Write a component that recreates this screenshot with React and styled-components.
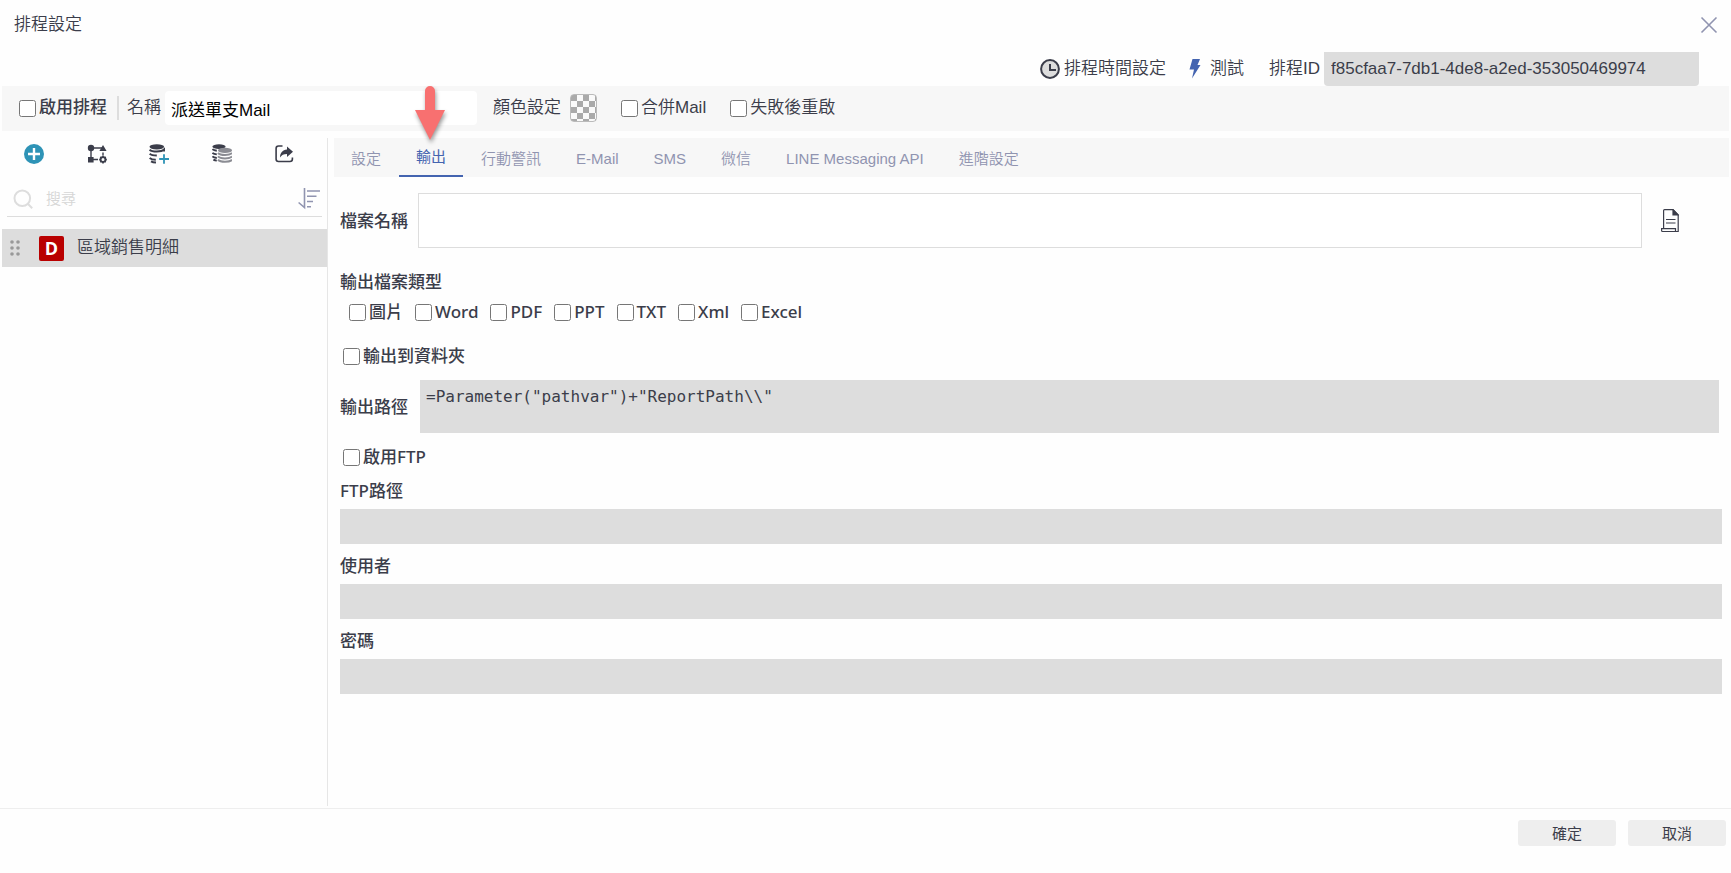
import React from 'react';
import styled, { createGlobalStyle } from 'styled-components';

const GlobalStyle = createGlobalStyle`
  * { box-sizing: border-box; }
  body {
    margin: 0;
    background: #fefefe;
    color: #3b3d4a;
    font: 350 17px/24px 'Liberation Sans', 'Noto Sans CJK TC', sans-serif;
  }
  input, textarea, button { font: inherit; color: inherit; margin: 0; }
`;

const Dialog = styled.div`
  display: flex;
  flex-direction: column;
  min-height: 100vh;
`;

const TitleBar = styled.header`
  display: flex;
  align-items: center;
  justify-content: space-between;
  height: 52px;
  padding: 0 12px 3px 14px;
`;

const Title = styled.h1`
  margin: 0;
  font-size: 17px;
  font-weight: inherit;
`;

const IconButton = styled.button`
  display: flex;
  align-items: center;
  justify-content: center;
  width: ${p => p.$size || 20}px;
  height: ${p => p.$size || 20}px;
  padding: 0;
  border: 0;
  background: none;
  cursor: pointer;
  svg { flex: none; }
`;

const ActionBar = styled.div`
  display: flex;
  align-items: center;
  justify-content: flex-end;
  padding-right: 32px;
`;

const Action = styled.button`
  display: flex;
  align-items: center;
  gap: ${p => p.$gap}px;
  margin-right: ${p => p.$after}px;
  padding: 0;
  border: 0;
  background: none;
  cursor: pointer;
`;

const IdInput = styled.input`
  width: 375px;
  height: 34px;
  margin-left: 4px;
  padding: 0 7px 1px;
  border: 0;
  border-radius: 0 0 4px 4px;
  background: #ddd;
`;

const Toolbar = styled.div`
  display: flex;
  align-items: center;
  height: 45px;
  margin: 0 2px;
  padding: 0 0 1px 17px;
  background: #f7f7f7;
`;

const CheckLabel = styled.label`
  display: flex;
  align-items: center;
  gap: 3px;
  font-weight: ${p => (p.$bold ? 500 : 'inherit')};
`;

const Check = styled.input.attrs({ type: 'checkbox' })`
  width: 17px;
  height: 17px;
`;

const ToolbarChecks = styled.div`
  display: flex;
  gap: 24px;
`;

const Divider = styled.span`
  width: 2px;
  height: 24px;
  margin: 0 8px 0 10px;
  background: #ddd;
`;

const NameInput = styled.input`
  width: 312px;
  height: 34px;
  margin: 0 16px 0 4px;
  padding: 0 6px;
  border: 0;
  border-radius: 4px;
  background: #fff;
  color: #000;
  font-weight: 400;
`;

const Swatch = styled.button`
  width: 27px;
  height: 28px;
  margin: 0 24px 0 9px;
  padding: 0;
  border: 1px solid #bbb;
  border-radius: 4px;
  background: repeating-conic-gradient(#fafafa 0 25%, #aaa 0 50%) 0 0 / 12px 12px;
`;

const Body = styled.div`
  display: flex;
  flex: 1;
  margin: 7px 2px 2px;
`;

const Side = styled.aside`
  flex: none;
  width: 326px;
  border-right: 1px solid #e6e6e6;
`;

const SideTools = styled.div`
  display: flex;
  justify-content: space-between;
  padding: 6px 33px 0 22px;
`;

const SearchBox = styled.div`
  display: flex;
  align-items: center;
  height: 36px;
  margin: 17px 5px 12px;
  padding: 0 2px 0 6px;
  border-bottom: 1px solid #ddd;
`;

const SearchInput = styled.input`
  flex: 1;
  min-width: 0;
  padding: 0 13px;
  border: 0;
  background: none;
  font-size: 15px;
  outline: 0;
  &::placeholder { color: #d6d6d6; }
`;

const ReportItem = styled.div`
  display: flex;
  align-items: center;
  height: 38px;
  padding-left: 8px;
  background: #ddd;
`;

const ReportBadge = styled.span`
  width: 25px;
  height: 25px;
  margin: 0 13px 0 19px;
  border-radius: 2px;
  background: #b90000;
  color: #fff;
  font: 700 18px/24px 'Open Sans', sans-serif;
  text-align: center;
`;

const Content = styled.main`
  flex: 1;
  min-width: 0;
  padding-left: 6px;
`;

const Tabs = styled.nav`
  display: flex;
  gap: 1px;
  height: 39px;
  background: #f7f7f7;
`;

const Tab = styled.button`
  position: relative;
  padding: ${p => (p.$active ? '0 17px' : '4px 17px 0')};
  border: 0;
  border-bottom: 2px solid ${p => (p.$active ? '#4464b0' : 'transparent')};
  background: none;
  color: ${p => (p.$active ? '#4464b0' : '#9094b0')};
  font-size: 15px;
  font-weight: ${p => (p.$active ? 400 : 'inherit')};
  white-space: nowrap;
  cursor: pointer;
`;

const Pointer = styled.svg`
  position: absolute;
  left: 50%;
  bottom: 34px;
  margin-left: -19px;
  overflow: visible;
  filter: drop-shadow(1px 3px 2px rgba(0, 0, 0, 0.4));
  pointer-events: none;
`;

const Form = styled.form`
  padding: 16px 7px 0 6px;
  font-family: 'Noto Sans', 'Noto Sans CJK TC', sans-serif;
  font-weight: 500;
`;

const FieldRow = styled.div`
  display: flex;
  align-items: center;
  gap: ${p => p.$gap}px;
  padding-right: ${p => p.$right}px;
`;

const ExpressionBox = styled.textarea`
  display: block;
  flex: 1;
  min-width: 0;
  height: ${p => (p.disabled ? 53 : 55)}px;
  padding: ${p => (p.disabled ? '5px 6px' : '4px')};
  border: ${p => (p.disabled ? 0 : '1px solid #ddd')};
  background: ${p => (p.disabled ? '#ddd' : '#fff')};
  color: #3b3d4a;
  font: 400 16px/24px 'DejaVu Sans Mono', monospace;
  resize: none;
`;

const GroupTitle = styled.div`
  margin-top: 22px;
`;

const TypeList = styled.div`
  display: flex;
  gap: 12px;
  margin: 6px 0 20px;
  padding-left: 9px;
`;

const Option = styled.div`
  display: flex;
  padding: ${p => p.$pad};
`;

const Field = styled.label`
  display: block;
  margin-bottom: 10px;
`;

const FieldInput = styled.input`
  display: block;
  width: 100%;
  height: 35px;
  margin-top: 6px;
  padding: 0 6px;
  border: 0;
  background: #ddd;
`;

const Footer = styled.footer`
  display: flex;
  justify-content: flex-end;
  gap: 12px;
  height: 65px;
  padding: 11px 5px 0;
  border-top: 1px solid #eee;
`;

const FooterButton = styled.button`
  width: 98px;
  height: 26px;
  padding: 2px 0 0;
  border: 0;
  border-radius: 3px;
  background: #eee;
  font-size: 15px;
  font-weight: 400;
  cursor: pointer;
`;

const CloseIcon = () => (
  <svg width="18" height="18" viewBox="0 0 18 18" stroke="#9094b0" strokeWidth="1.6">
    <path d="M1.5 1.5l15 15M16.5 1.5l-15 15" />
  </svg>
);

const ClockIcon = () => (
  <svg width="20" height="20" viewBox="0 0 20 20" stroke="#3b3d4a" strokeWidth="2">
    <circle cx="10" cy="10" r="8.9" fill="#ddd" />
    <path d="M10 5v6h6" fill="none" />
  </svg>
);

const BoltIcon = () => (
  <svg width="12" height="20" viewBox="0 0 12 20" fill="#4464b0">
    <path d="M3.5 0H11L8.5 6H11.5L3 19.5L5 10.5H0.5Z" />
  </svg>
);

const AddIcon = () => (
  <svg width="20" height="20" viewBox="0 0 20 20">
    <circle cx="10" cy="10" r="10" fill="#2e93b6" />
    <path d="M10 4v12M4 10h12" stroke="#fff" strokeWidth="2.4" />
  </svg>
);

const FlowIcon = () => (
  <svg width="20" height="20" viewBox="0 0 20 20" fill="#3b3d4a">
    <path d="M4 4.5V16M4 4h11M16 8.5v3M6 15.5h5" stroke="#3b3d4a" strokeWidth="1.4" />
    <circle cx="4" cy="4" r="3.2" />
    <path d="M16 1l3.6 6h-7.2zM1 13h5.6v5.6H1z" />
    <circle cx="16" cy="15.6" r="2.4" fill="none" stroke="#3b3d4a" strokeWidth="1.8" />
    <path
      d="M16 11.8v1.4M16 18v1.4M12.2 15.6h1.4M18.4 15.6h1.4M13.3 12.9l1 1M17.7 17.3l1 1M18.7 12.9l-1 1M14.3 17.3l-1 1"
      stroke="#3b3d4a"
      strokeWidth="1.6"
    />
  </svg>
);

const DataAddIcon = () => (
  <svg width="20" height="20" viewBox="0 0 20 20">
    <ellipse cx="7.8" cy="2.8" rx="7.3" ry="2.6" fill="#3b3d4a" />
    <path
      d="M.6 5.6c1.5 1.5 4 1.9 7.2 1.9s5.6-.4 7.2-1.9v2M.6 9.8c1.5 1.4 4 1.8 7.2 1.8M.6 14c1.5 1.4 3.5 1.8 6.2 1.8M2 17.4c1.4.8 3 1.1 5 1.2"
      fill="none"
      stroke="#3b3d4a"
      strokeWidth="2"
    />
    <path d="M15 10.2v9.6M10.2 15H20" stroke="#2e93b6" strokeWidth="1.8" />
  </svg>
);

const DataCopyIcon = () => (
  <svg width="20" height="20" viewBox="0 0 20 20">
    <ellipse cx="7" cy="2.6" rx="6.6" ry="2.3" fill="#3b3d4a" />
    <path
      d="M.4 5.2c1 1 2.500 1.400 4.400 1.600M.4 8.800c1 1 2.500 1.400 4.400 1.600M.4 12.400c1 1 2.500 1.400 4.400 1.600M1.400 15.600c1 .6 2 .9 3.400 1"
      fill="none"
      stroke="#3b3d4a"
      strokeWidth="1.9"
    />
    <ellipse cx="13" cy="6.4" rx="7" ry="2.7" fill="#8b8c93" />
    <path
      d="M6 9c1.5 1.6 4 2 7 2s5.5-.4 7-2M6 12.4c1.5 1.6 4 2 7 2s5.5-.4 7-2M6 15.8c1.5 1.6 4 2 7 2s5.5-.4 7-2"
      fill="none"
      stroke="#8b8c93"
      strokeWidth="2"
    />
  </svg>
);

const ShareIcon = () => (
  <svg width="20" height="20" viewBox="0 0 20 20">
    <path
      d="M8.500 2H4.500A2.400 2.400 0 0 0 2.100 4.400v10.700A2.400 2.400 0 0 0 4.500 17.500h11.500a2.400 2.400 0 0 0 2.400-2.400v-1.600"
      fill="none"
      stroke="#3b3d4a"
      strokeWidth="1.6"
    />
    <path d="M13 2.600l6 5.200-6 5.200V10c-3.500 0-5.300 1-7 3.500C6.200 9 8.500 6 13 5.600z" fill="#3b3d4a" />
  </svg>
);

const SearchIcon = () => (
  <svg width="20" height="20" viewBox="0 0 20 20" fill="none" stroke="#ddd" strokeWidth="2">
    <circle cx="9.3" cy="9.3" r="7.8" />
    <path d="M14.8 14.8l4.4 4.4" />
  </svg>
);

const SortIcon = () => (
  <svg width="22" height="22" viewBox="0 0 22 22" fill="none" stroke="#9094b0" strokeWidth="1.6">
    <path d="M6.5 0v19.5L.6 14.500M9 3h13M9 8.300h9.500M9 13.500h6M9 18.700h4" />
  </svg>
);

const DragIcon = () => (
  <svg width="10" height="16" viewBox="0 0 10 16" fill="#999">
    {[2, 8, 14].map(y => [2, 8].map(x => <circle key={`${x}-${y}`} cx={x} cy={y} r="1.8" />))}
  </svg>
);

const ScriptIcon = () => (
  <svg width="18" height="24" viewBox="0 0 18 24" fill="none" stroke="#3b3d4a" strokeWidth="1.2">
    <path d="M2.600 19.500V1.600Q2.600.7 3.500.7H12L17.200 6V22.500H1.500Q.6 22.500.6 21.600V19.600H14.500V22" />
    <path d="M12 .7V6h5.200z" fill="#3b3d4a" />
    <path d="M5 10.500h9.500M5 14h9.500" />
  </svg>
);

const tabs = ['設定', '輸出', '行動警訊', 'E-Mail', 'SMS', '微信', 'LINE Messaging API', '進階設定'];
const fileTypes = ['圖片', 'Word', 'PDF', 'PPT', 'TXT', 'Xml', 'Excel'];
const ftpFields = ['FTP路徑', '使用者', '密碼'];

const sideTools = [
  { label: '新增', icon: <AddIcon /> },
  { label: '流程', icon: <FlowIcon /> },
  { label: '新增資料', icon: <DataAddIcon /> },
  { label: '資料', icon: <DataCopyIcon /> },
  { label: '匯出', icon: <ShareIcon /> },
];

const App = () => {
  const [activeTab, setActiveTab] = React.useState('輸出');
  const [name, setName] = React.useState('派送單支Mail');

  return (
    <Dialog>
      <GlobalStyle />
      <TitleBar>
        <Title>排程設定</Title>
        <IconButton aria-label="關閉"><CloseIcon /></IconButton>
      </TitleBar>

      <ActionBar>
        <Action $gap={4} $after={23}><ClockIcon />排程時間設定</Action>
        <Action $gap={9} $after={25}><BoltIcon />測試</Action>
        <label htmlFor="schedule-id">排程ID</label>
        <IdInput id="schedule-id" readOnly value="f85cfaa7-7db1-4de8-a2ed-353050469974" />
      </ActionBar>

      <Toolbar>
        <CheckLabel $bold><Check />啟用排程</CheckLabel>
        <Divider />
        <label htmlFor="schedule-name">名稱</label>
        <NameInput id="schedule-name" value={name} onChange={e => setName(e.target.value)} />
        <span>顏色設定</span>
        <Swatch aria-label="顏色設定" />
        <ToolbarChecks>
          <CheckLabel><Check />合併Mail</CheckLabel>
          <CheckLabel><Check />失敗後重啟</CheckLabel>
        </ToolbarChecks>
      </Toolbar>

      <Body>
        <Side>
          <SideTools>
            {sideTools.map(tool => (
              <IconButton key={tool.label} aria-label={tool.label}>{tool.icon}</IconButton>
            ))}
          </SideTools>
          <SearchBox>
            <SearchIcon />
            <SearchInput placeholder="搜尋" aria-label="搜尋" />
            <IconButton $size={22} aria-label="排序"><SortIcon /></IconButton>
          </SearchBox>
          <ReportItem>
            <DragIcon />
            <ReportBadge>D</ReportBadge>
            區域銷售明細
          </ReportItem>
        </Side>

        <Content>
          <Tabs>
            {tabs.map(tab => (
              <Tab key={tab} $active={tab === activeTab} onClick={() => setActiveTab(tab)}>
                {tab}
                {tab === '輸出' && (
                  <Pointer width="36" height="56" viewBox="0 0 36 56" fill="#f87070">
                    <path d="M13 6a5 5 0 0 1 10 0v19h10L18 55L3 25h10z" />
                  </Pointer>
                )}
              </Tab>
            ))}
          </Tabs>

          <Form onSubmit={e => e.preventDefault()}>
            <FieldRow $gap={10} $right={34}>
              <label htmlFor="file-name">檔案名稱</label>
              <ExpressionBox id="file-name" />
              <IconButton $size={36} type="button" aria-label="運算式"><ScriptIcon /></IconButton>
            </FieldRow>

            <GroupTitle>輸出檔案類型</GroupTitle>
            <TypeList>
              {fileTypes.map(type => (
                <CheckLabel key={type}><Check />{type}</CheckLabel>
              ))}
            </TypeList>

            <Option $pad="0 0 12px 3px">
              <CheckLabel><Check />輸出到資料夾</CheckLabel>
            </Option>
            <FieldRow $gap={12} $right={3}>
              <label htmlFor="output-path">輸出路徑</label>
              <ExpressionBox id="output-path" disabled defaultValue={'=Parameter("pathvar")+"ReportPath\\\\"'} />
            </FieldRow>
            <Option $pad="12px 0 10px 3px">
              <CheckLabel><Check />啟用FTP</CheckLabel>
            </Option>

            {ftpFields.map(field => (
              <Field key={field}>
                {field}
                <FieldInput disabled type={field === '密碼' ? 'password' : 'text'} />
              </Field>
            ))}
          </Form>
        </Content>
      </Body>

      <Footer>
        <FooterButton>確定</FooterButton>
        <FooterButton>取消</FooterButton>
      </Footer>
    </Dialog>
  );
};

export default App;
